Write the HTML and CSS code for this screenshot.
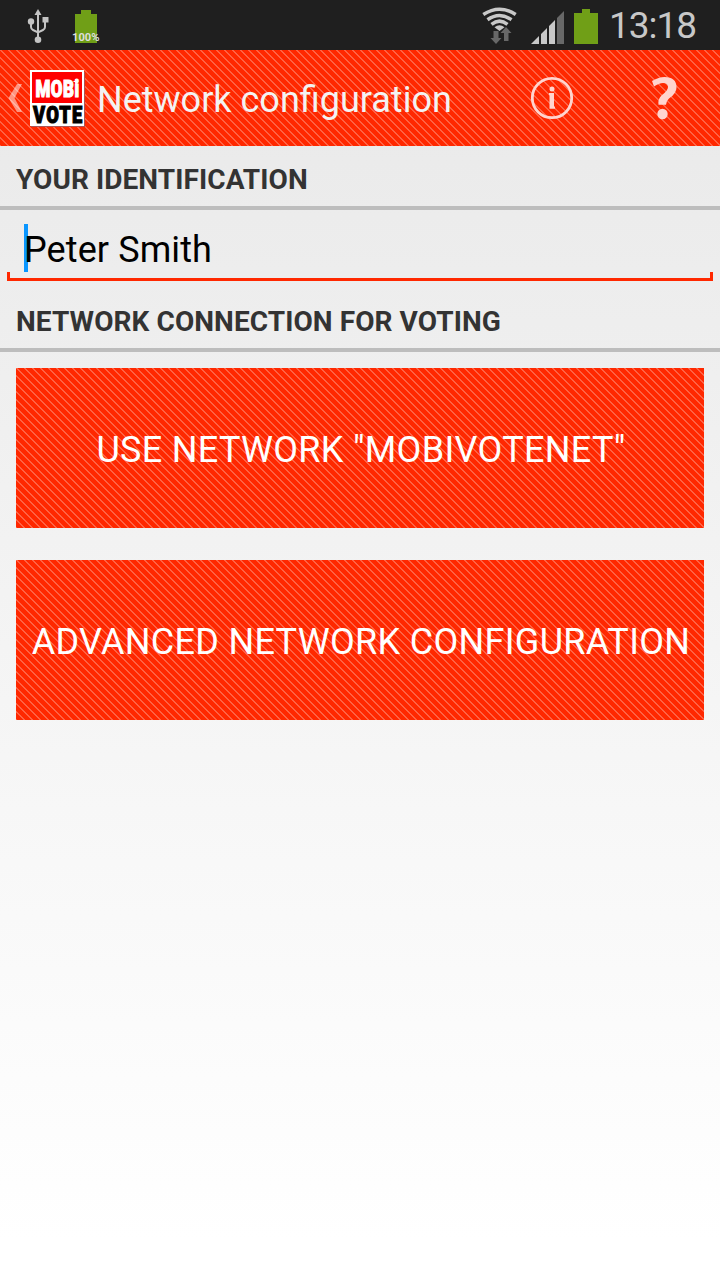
FILE: index.html
```html
<!DOCTYPE html>
<html lang="en">
<head>
<meta charset="utf-8">
<title>Network configuration</title>
<link rel="stylesheet" href="styles.css">
</head>
<body>
<div class="status">
  <svg class="status-icons" width="720" height="50" viewBox="0 0 720 50">
    <g fill="none" stroke="#c4c4c4" stroke-width="2">
      <path d="M38 14V40M31 22V27Q31 29 33 30L38 32.500L43 30Q45 29 45 27V20"/>
    </g>
    <g fill="#c4c4c4">
      <path d="M38 9L41.500 15H34.500Z"/><circle cx="31" cy="21.500" r="3.200"/><path d="M42.500 17H48.500V22.500H42.500Z"/><circle cx="38" cy="39.700" r="3.300"/>
    </g>
    <path fill="#709f17" d="M75 14H81V10H91V14H97V43H75Z"/>
    <text class="percent" x="72" y="41" textLength="27.500" lengthAdjust="spacingAndGlyphs">100%</text>
    <g fill="none" stroke="#c8c8c8" stroke-width="3.500">
      <path d="M483.300 14.500Q499.500 4 515.700 14.500M487.500 19.700Q499.500 11.200 511.500 19.700M491.500 24.300Q499.500 18 507.500 24.300"/>
    </g>
    <path fill="#c8c8c8" d="M494.500 27.200Q499.500 23.500 504.500 27.200L499.500 31Z"/>
    <path fill="#686868" d="M493.500 31H498.500V38H501.500L496 44L490.500 38H493.500Z M504 41H508.500V33H511.500L506 27L500.500 33H504Z"/>
    <path fill="#c8c8c8" d="M531 44L539 36V44ZM541 34L547 28V44H541ZM549 26L555 20V44H549Z"/>
    <path fill="#686868" d="M557 18L564 11V44H557Z"/>
    <path fill="#709f17" d="M574 13H582V9H590V13H598V44H574Z"/>
    <text class="clock" x="609" y="38" textLength="88">13:18</text>
  </svg>
</div>
<header class="bar stripes">
  <svg class="back" width="30" height="96" viewBox="0 0 30 96"><path d="M17 34H22L14.500 48L22 62H17L8.500 48Z" fill="#fff" fill-opacity=".5"/></svg>
  <svg class="logo" width="56" height="58" viewBox="0 0 56 58">
    <path fill="#a55" d="M1 2H55V57H1Z"/>
    <path fill="#fff" d="M0 0H54V56H0Z"/>
    <path fill="#f00" d="M2 2H52V33H2Z"/>
    <text class="logo-text light" x="5.500" y="27" textLength="44" lengthAdjust="spacingAndGlyphs">MOBi</text>
    <path stroke="#fff" d="M43.500 11.500H48M45.800 9V14"/>
    <text class="logo-text dark" x="3" y="52.500" textLength="50.500" lengthAdjust="spacingAndGlyphs">VOTE</text>
  </svg>
  <h1 class="title">Network configuration</h1>
  <svg class="actions" width="210" height="96" viewBox="0 0 210 96">
    <circle cx="42" cy="48" r="19.700" fill="none" stroke="#ffd4ce" stroke-width="2.800"/>
    <g fill="#ffd4ce"><circle cx="42" cy="39" r="2.500"/><path d="M39 43H44V56.500H45V58.800H39.500V45H39Z"/>
    <path d="M142 31Q149 27 154.500 27Q166.500 27 166.500 37.500Q166.500 43.500 159 48.500Q156 51 156 54.800H148.500Q147.500 49 152 45Q158 40.500 158 37Q158 33 153 33Q149 33 144 36.500Z"/><circle cx="152.500" cy="64" r="5.200"/></g>
  </svg>
</header>
<main>
  <h2 class="section">YOUR IDENTIFICATION</h2>
  <div class="field"><span class="caret"></span><span class="value">Peter Smith</span></div>
  <h2 class="section second">NETWORK CONNECTION FOR VOTING</h2>
  <div class="buttons">
    <button class="stripes">USE NETWORK "MOBIVOTENET"</button>
    <button class="stripes">ADVANCED NETWORK CONFIGURATION</button>
  </div>
</main>
</body>
</html>
```
FILE: styles.css
```css
* { box-sizing: border-box; }
body {
  margin: 0;
  width: 720px;
  height: 1280px;
  overflow: hidden;
  font-family: Roboto, sans-serif;
  background: linear-gradient(#e8e8e8, #fff 1240px);
}
.status { height: 50px; background: #1f1f1f; }
.status-icons { display: block; }
.percent { font-size: 11px; font-weight: 700; fill: #ddd; }
.clock { font-size: 37px; fill: #c8c8c8; }
/* 8px tile holding one diagonal stepped stripe, two pixels wide per row */
.stripes {
  background: #ff2800 url("data:image/svg+xml,%3Csvg xmlns='http://www.w3.org/2000/svg' width='8' height='8' shape-rendering='crispEdges'%3E%3Cpath fill='%23ff6244' d='M0 0h2v1h1v1h1v1h1v1h1v1h1v1h1v2h-1v-1h-1v-1h-1v-1h-1v-1h-1v-1h-1v-1h-1v-1h-1zM0 7h1v1h-1z'/%3E%3C/svg%3E") 0 0 / 8px 8px;
}
.bar { height: 96px; display: flex; align-items: center; }
.logo { margin-top: 2px; flex: none; overflow: visible; }
.logo-text { font-family: Roboto, sans-serif; font-weight: 900; font-size: 24px; letter-spacing: 1.6px; stroke-width: 1.2px; }
.light { fill: #fff; stroke: #fff; letter-spacing: .6px; }
.dark { fill: #000; stroke: #000; }
.title { margin: 3px 0 0 11px; width: 413px; font-size: 36px; font-weight: 400; color: #f3f3f3; white-space: nowrap; }
.actions { flex: none; }
.section {
  margin: 0;
  height: 64px;
  padding: 2px 16px 0;
  border-bottom: 4px solid #bdbdbd;
  font-size: 28px;
  letter-spacing: .08px;
  line-height: 64px;
  font-weight: 700;
  color: #333;
}
.field {
  height: 71px;
  margin: 0 7px;
  padding: 14px 0 0 17px;
  display: flex;
  background:
    linear-gradient(#ff2800, #ff2800) left bottom / 100% 3px no-repeat,
    linear-gradient(#ff2800, #ff2800) left bottom / 3px 9px no-repeat,
    linear-gradient(#ff2800, #ff2800) right bottom / 3px 9px no-repeat;
}
.caret { width: 4px; height: 48px; margin-right: -4px; background: #0a96ff; }
.value { font-size: 36px; line-height: 52px; letter-spacing: .1px; color: #000; }
.second { margin-top: 7px; }
.buttons { display: flex; flex-direction: column; gap: 32px; padding: 16px; }
.buttons button {
  height: 160px;
  border: 0;
  padding: 3px 0 0 2px;
  color: #fff;
  font: 36px Roboto, sans-serif;
  letter-spacing: .32px;
  white-space: nowrap;
}
```
